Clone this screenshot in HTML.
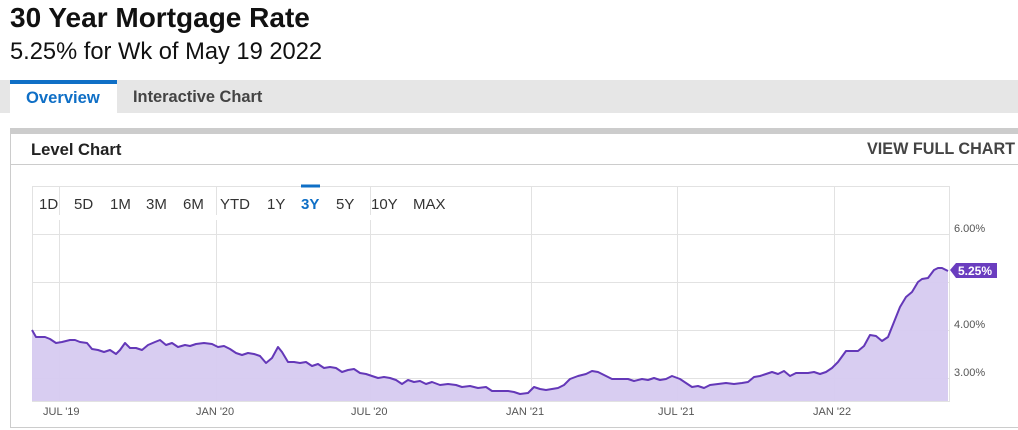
<!DOCTYPE html>
<html><head><style>
body{margin:0;width:1018px;height:430px;background:#fff;font-family:"Liberation Sans",Arial,sans-serif;position:relative;overflow:hidden}
.a{position:absolute}
</style></head><body>
<div class="a" style="left:10px;top:2px;font-size:28px;font-weight:bold;color:#111">30 Year Mortgage Rate</div>
<div class="a" style="left:10px;top:39px;font-size:23.7px;color:#111">5.25% for Wk of May 19 2022</div>
<div class="a" style="left:0;top:80px;width:1018px;height:33px;background:#e6e6e6"></div>
<div class="a" style="left:10px;top:80px;width:107px;height:33px;background:#fff;border-top:4px solid #0f6fc6;box-sizing:border-box"></div>
<div class="a" style="left:26px;top:88px;font-size:16.6px;font-weight:bold;color:#0f6fc6">Overview</div>
<div class="a" style="left:133px;top:88px;font-size:16.4px;font-weight:bold;color:#444">Interactive Chart</div>
<div class="a" style="left:10px;top:128px;width:1010px;height:300px;border:1px solid #ccc;border-top:6px solid #ccc;box-sizing:border-box"></div>
<div class="a" style="left:11px;top:164px;width:1007px;height:1px;background:#ccc"></div>
<div class="a" style="left:31px;top:140px;font-size:16.6px;font-weight:bold;color:#222">Level Chart</div>
<div class="a" style="left:867px;top:140px;font-size:16.2px;font-weight:bold;color:#444">VIEW FULL CHART</div>
<svg class="a" style="left:0;top:0" width="1018" height="430">
<g stroke="#e2e2e2" stroke-width="1" fill="none">
<rect x="32.5" y="186.5" width="917" height="215"/>
<line x1="59.5" y1="186" x2="59.5" y2="401"/><line x1="216.5" y1="186" x2="216.5" y2="401"/><line x1="370.5" y1="186" x2="370.5" y2="401"/><line x1="531.5" y1="186" x2="531.5" y2="401"/><line x1="677.5" y1="186" x2="677.5" y2="401"/><line x1="834.5" y1="186" x2="834.5" y2="401"/>
<line x1="32" y1="234.5" x2="949" y2="234.5"/><line x1="32" y1="282.5" x2="949" y2="282.5"/><line x1="32" y1="330.5" x2="949" y2="330.5"/><line x1="32" y1="378.5" x2="949" y2="378.5"/>
</g>
<rect x="33" y="215" width="420" height="5" fill="#fff"/>
<line x1="301" y1="186" x2="320" y2="186" stroke="#0f6fc6" stroke-width="3"/>
<polygon fill="#d6caf0" fill-opacity="0.95" points="32,401 32,330 36,337 45,337 50,339 56,343 62,342 70,340 75,340 80,342 87,343 92,349 98,350 104,352 110,350 116,354 120,350 125,343 130,348 136,348 142,350 148,345 155,342 160,340 166,345 172,343 178,347 185,345 190,346 196,344 204,343 212,344 218,347 224,346 230,349 236,353 242,355 248,353 254,354 260,356 266,363 272,358 278,347 282,352 288,362 294,362 300,363 306,362 312,366 318,364 324,368 330,367 336,368 342,372 348,370 354,369 360,373 366,374 372,376 378,378 384,377 390,378 396,380 402,384 408,380 414,382 420,381 426,384 432,382 440,385 448,384 456,385 462,387 470,386 478,388 486,387 492,391 500,391 508,391 514,392 520,394 528,393 534,387 540,389 546,390 552,389 558,388 564,385 570,379 578,376 586,374 592,371 598,372 604,375 612,379 620,379 628,379 634,381 642,379 648,380 654,378 660,380 666,379 672,376 680,379 686,383 692,387 698,386 704,388 710,385 718,384 726,383 734,384 742,383 748,382 754,377 760,376 766,374 772,372 778,374 784,371 790,376 796,373 802,373 808,373 814,372 820,374 826,372 832,368 838,362 846,351 852,351 858,351 864,346 870,335 876,336 882,341 888,337 894,322 900,307 906,297 912,292 918,282 922,279 928,278 934,270 938,268 942,268 948,271 948,401"/>
<polyline fill="none" stroke="#6438b8" stroke-width="2" stroke-linejoin="round" points="32,330 36,337 45,337 50,339 56,343 62,342 70,340 75,340 80,342 87,343 92,349 98,350 104,352 110,350 116,354 120,350 125,343 130,348 136,348 142,350 148,345 155,342 160,340 166,345 172,343 178,347 185,345 190,346 196,344 204,343 212,344 218,347 224,346 230,349 236,353 242,355 248,353 254,354 260,356 266,363 272,358 278,347 282,352 288,362 294,362 300,363 306,362 312,366 318,364 324,368 330,367 336,368 342,372 348,370 354,369 360,373 366,374 372,376 378,378 384,377 390,378 396,380 402,384 408,380 414,382 420,381 426,384 432,382 440,385 448,384 456,385 462,387 470,386 478,388 486,387 492,391 500,391 508,391 514,392 520,394 528,393 534,387 540,389 546,390 552,389 558,388 564,385 570,379 578,376 586,374 592,371 598,372 604,375 612,379 620,379 628,379 634,381 642,379 648,380 654,378 660,380 666,379 672,376 680,379 686,383 692,387 698,386 704,388 710,385 718,384 726,383 734,384 742,383 748,382 754,377 760,376 766,374 772,372 778,374 784,371 790,376 796,373 802,373 808,373 814,372 820,374 826,372 832,368 838,362 846,351 852,351 858,351 864,346 870,335 876,336 882,341 888,337 894,322 900,307 906,297 912,292 918,282 922,279 928,278 934,270 938,268 942,268 948,271"/>
<g font-family="Liberation Sans,Arial,sans-serif" font-size="11" fill="#555">
<text x="954" y="232">6.00%</text><text x="954" y="328">4.00%</text><text x="954" y="376">3.00%</text>
<text x="43" y="415">JUL '19</text><text x="196" y="415">JAN '20</text><text x="351" y="415">JUL '20</text><text x="506" y="415">JAN '21</text><text x="658" y="415">JUL '21</text><text x="813" y="415">JAN '22</text>
</g>
<polygon points="950,270 956,263 997,263 997,278 956,278" fill="#6a3dbf"/>
<text x="958" y="275" font-family="Liberation Sans,Arial,sans-serif" font-size="12" font-weight="bold" fill="#fff">5.25%</text>
<g font-family="Liberation Sans,Arial,sans-serif" font-size="15" fill="#333">
<text x="39" y="209">1D</text><text x="74" y="209">5D</text><text x="110" y="209">1M</text><text x="146" y="209">3M</text><text x="183" y="209">6M</text><text x="220" y="209">YTD</text><text x="267" y="209">1Y</text><text x="301" y="209" fill="#0f6fc6" font-weight="bold">3Y</text><text x="336" y="209">5Y</text><text x="371" y="209">10Y</text><text x="413" y="209">MAX</text>
</g>
</svg>
</body></html>
